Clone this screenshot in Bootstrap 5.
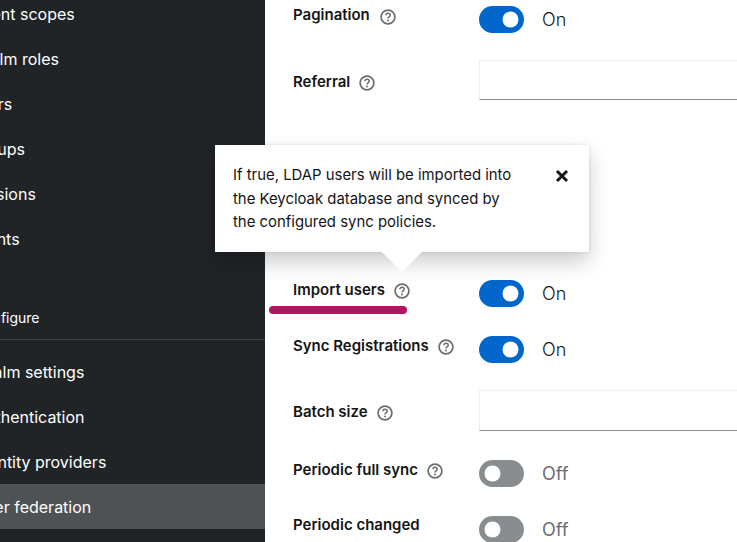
<!DOCTYPE html>
<html lang="en">
<head>
<meta charset="utf-8">
<title>User federation</title>
<link href="https://cdn.jsdelivr.net/npm/bootstrap@5.3.0/dist/css/bootstrap.min.css" rel="stylesheet">
<style>
html,body{height:542px;overflow:hidden}
body{font-family:Inter,"Liberation Sans",sans-serif;color:#151515;background:#fff}
.stage{position:relative;width:737px;height:542px;overflow:hidden}
.side-rail{width:265px;flex:none;background:#212427;color:#fff;height:542px;overflow:hidden;white-space:nowrap}
.rail-list{margin:-8px 0 0;padding:0;list-style:none}
.rail-item{height:45px;line-height:45px;font-size:16px}
.rail-item>span{display:inline-block;margin-left:var(--nudge)}
.rail-head~.rail-item{padding-top:1px}
.rail-item.is-on{background:#4f5255}
.rail-head{font-size:14px;height:78px;padding-top:46px;line-height:20px;border-bottom:1px solid #3c3f42;margin-bottom:9px}
.rail-head>span{display:inline-block;margin-left:-26px}
.rail-list>li:nth-child(1){--nudge:-28px}
.rail-list>li:nth-child(2){--nudge:-29px}
.rail-list>li:nth-child(3){--nudge:-32px}
.rail-list>li:nth-child(4){--nudge:-30px}
.rail-list>li:nth-child(5){--nudge:-32px}
.rail-list>li:nth-child(6){--nudge:-31px}
.rail-list>li:nth-child(8){--nudge:-26px}
.rail-list>li:nth-child(9){--nudge:-25px}
.rail-list>li:nth-child(10){--nudge:-26px}
.rail-list>li:nth-child(11){--nudge:-26px}
.main-pane{flex:1 1 auto;padding:6px 0 0 28px;min-width:0;overflow:hidden}
.set-row{display:flex;align-items:flex-start}
.set-label{width:186px;flex:none;font-weight:600;font-size:15px;line-height:18px;display:flex;align-items:center;white-space:nowrap}
.help-ico{width:16px;height:16px;margin-left:9px;margin-top:3px;flex:none}
.r-first .set-label{align-items:flex-start}
.r-first .help-ico{margin-left:10px;margin-top:3px}
.set-row.r-input .set-label{padding-top:12px}
.set-row.r-batch .set-label{padding-top:12px}
.after-toggle{margin-top:27px}
.after-input{margin-top:29px}
.after-ref{margin-top:180px}
.tog-wrap{display:flex;align-items:flex-start;padding:0;margin:0;min-height:0;height:27px}
.tog-wrap .form-check-input{width:45px;height:27px;margin:0;float:none;border:0;border-radius:14px;background-color:#8a8d90;
background-image:url("data:image/svg+xml,%3csvg xmlns='http://www.w3.org/2000/svg' viewBox='0 0 27 27'%3e%3ccircle cx='13.5' cy='13.5' r='8' fill='%23fff'/%3e%3c/svg%3e");background-size:27px 27px;background-position:left center}
.tog-wrap .form-check-input:checked{background-color:#06c;background-position:right center}
.tog-text{margin-left:18px;font-size:18px;line-height:27px;font-weight:300}
.tog-text.is-off{color:#6a6e73;font-weight:400}
.flat-input{width:320px;height:40px;border:1px solid #f0f0f0;border-bottom-color:#8a8d90;border-radius:0;padding:0 8px;background:#fff}
.r-batch .flat-input{height:41px}
.pop-box{position:absolute;left:215px;top:145px;width:374px;height:107px;background:#fff;box-shadow:0 10px 20px rgba(3,3,3,.2),0 0 4px rgba(3,3,3,.1);padding:19px 18px;font-size:14.9px;line-height:23.5px}
.pop-text{width:285px}
.pop-tip{position:absolute;left:167px;top:107px;width:0;height:0;border-left:20px solid transparent;border-right:20px solid transparent;border-top:20px solid #fff}
.pop-x{position:absolute;left:340px;top:24px;width:14px;height:14px;padding:0;border:0;background:none;line-height:0}
.ink-mark{position:absolute;left:269px;top:306px;width:138px;height:8px;border-radius:4px;background:#b5135f}
</style>
</head>
<body>
<div class="stage d-flex">
  <nav class="side-rail">
    <ul class="rail-list">
      <li class="rail-item"><span>Client scopes</span></li>
      <li class="rail-item"><span>Realm roles</span></li>
      <li class="rail-item"><span>Users</span></li>
      <li class="rail-item"><span>Groups</span></li>
      <li class="rail-item"><span>Sessions</span></li>
      <li class="rail-item"><span>Events</span></li>
      <li class="rail-head"><span>Configure</span></li>
      <li class="rail-item"><span>Realm settings</span></li>
      <li class="rail-item"><span>Authentication</span></li>
      <li class="rail-item"><span>Identity providers</span></li>
      <li class="rail-item is-on"><span>User federation</span></li>
    </ul>
  </nav>
  <main class="main-pane">
    <div class="set-row r-first">
      <div class="set-label">Pagination<svg class="help-ico" viewBox="0 0 16 16" fill="none"><circle cx="8" cy="8" r="6.9" stroke="#6a6e73" stroke-width="1.7"/><path d="M5.9 6.3c.1-1.3 1-2 2.2-2 1.2 0 2.1.8 2.1 1.9 0 1.7-2.2 1.6-2.2 3.2" stroke="#6a6e73" stroke-width="1.5"/><circle cx="8" cy="11.5" r=".95" fill="#6a6e73"/></svg></div>
      <label class="form-check form-switch tog-wrap"><input class="form-check-input" type="checkbox" role="switch" checked><span class="tog-text">On</span></label>
    </div>
    <div class="set-row r-input after-toggle">
      <div class="set-label">Referral<svg class="help-ico" viewBox="0 0 16 16" fill="none"><circle cx="8" cy="8" r="6.9" stroke="#6a6e73" stroke-width="1.7"/><path d="M5.9 6.3c.1-1.3 1-2 2.2-2 1.2 0 2.1.8 2.1 1.9 0 1.7-2.2 1.6-2.2 3.2" stroke="#6a6e73" stroke-width="1.5"/><circle cx="8" cy="11.5" r=".95" fill="#6a6e73"/></svg></div>
      <input class="form-control flat-input" type="text">
    </div>
    <div class="set-row after-ref">
      <div class="set-label">Import users<svg class="help-ico" viewBox="0 0 16 16" fill="none"><circle cx="8" cy="8" r="6.9" stroke="#6a6e73" stroke-width="1.7"/><path d="M5.9 6.3c.1-1.3 1-2 2.2-2 1.2 0 2.1.8 2.1 1.9 0 1.7-2.2 1.6-2.2 3.2" stroke="#6a6e73" stroke-width="1.5"/><circle cx="8" cy="11.5" r=".95" fill="#6a6e73"/></svg></div>
      <label class="form-check form-switch tog-wrap"><input class="form-check-input" type="checkbox" role="switch" checked><span class="tog-text">On</span></label>
    </div>
    <div class="set-row after-input">
      <div class="set-label">Sync Registrations<svg class="help-ico" viewBox="0 0 16 16" fill="none"><circle cx="8" cy="8" r="6.9" stroke="#6a6e73" stroke-width="1.7"/><path d="M5.9 6.3c.1-1.3 1-2 2.2-2 1.2 0 2.1.8 2.1 1.9 0 1.7-2.2 1.6-2.2 3.2" stroke="#6a6e73" stroke-width="1.5"/><circle cx="8" cy="11.5" r=".95" fill="#6a6e73"/></svg></div>
      <label class="form-check form-switch tog-wrap"><input class="form-check-input" type="checkbox" role="switch" checked><span class="tog-text">On</span></label>
    </div>
    <div class="set-row r-input r-batch after-toggle">
      <div class="set-label">Batch size<svg class="help-ico" viewBox="0 0 16 16" fill="none"><circle cx="8" cy="8" r="6.9" stroke="#6a6e73" stroke-width="1.7"/><path d="M5.9 6.3c.1-1.3 1-2 2.2-2 1.2 0 2.1.8 2.1 1.9 0 1.7-2.2 1.6-2.2 3.2" stroke="#6a6e73" stroke-width="1.5"/><circle cx="8" cy="11.5" r=".95" fill="#6a6e73"/></svg></div>
      <input class="form-control flat-input" type="text">
    </div>
    <div class="set-row after-input">
      <div class="set-label">Periodic full sync<svg class="help-ico" viewBox="0 0 16 16" fill="none"><circle cx="8" cy="8" r="6.9" stroke="#6a6e73" stroke-width="1.7"/><path d="M5.9 6.3c.1-1.3 1-2 2.2-2 1.2 0 2.1.8 2.1 1.9 0 1.7-2.2 1.6-2.2 3.2" stroke="#6a6e73" stroke-width="1.5"/><circle cx="8" cy="11.5" r=".95" fill="#6a6e73"/></svg></div>
      <label class="form-check form-switch tog-wrap"><input class="form-check-input" type="checkbox" role="switch"><span class="tog-text is-off">Off</span></label>
    </div>
    <div class="set-row after-input">
      <div class="set-label">Periodic changed</div>
      <label class="form-check form-switch tog-wrap"><input class="form-check-input" type="checkbox" role="switch"><span class="tog-text is-off">Off</span></label>
    </div>
  </main>
  <div class="pop-box" role="tooltip">
    <div class="pop-text">If true, LDAP users will be imported into the Keycloak database and synced by the configured sync policies.</div>
    <button class="pop-x" type="button" aria-label="Close"><svg width="14" height="14" viewBox="0 0 14 14"><path d="M2 2l10 10M12 2L2 12" stroke="#151515" stroke-width="3"/></svg></button>
    <div class="pop-tip"></div>
  </div>
  <div class="ink-mark"></div>
</div>
<script src="https://cdn.jsdelivr.net/npm/bootstrap@5.3.0/dist/js/bootstrap.bundle.min.js"></script>
</body>
</html>
